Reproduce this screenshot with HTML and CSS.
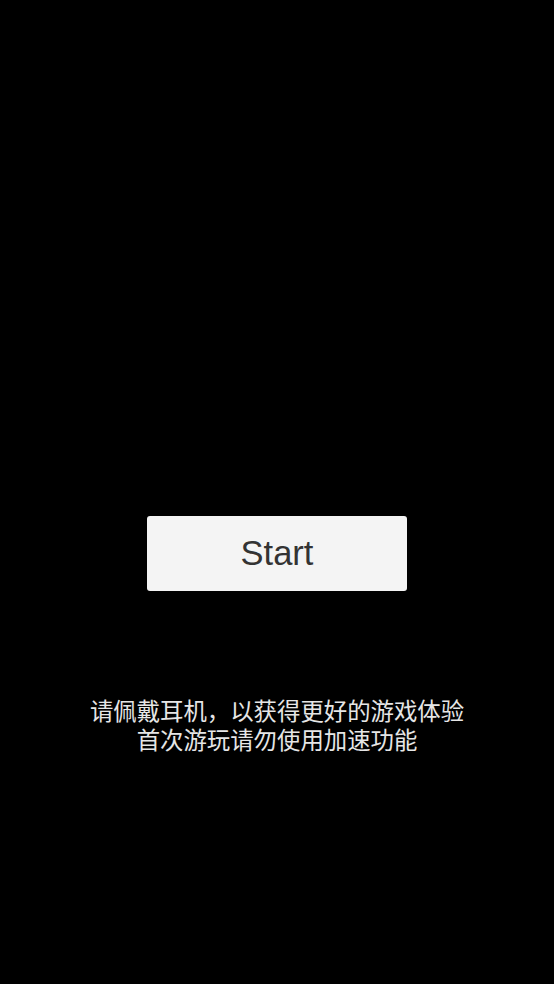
FILE: index.html
```html
<!DOCTYPE html>
<html lang="zh">
<head>
<meta charset="utf-8">
<title>Start</title>
<link rel="stylesheet" href="styles.css">
</head>
<body>
<main class="screen">
  <button class="start-btn" type="button">Start</button>
  <p class="notice"><span class="line">请佩戴耳机，以获得更好的游戏体验</span><span class="line">首次游玩请勿使用加速功能</span></p>
</main>
</body>
</html>
```
FILE: styles.css
```css
html, body {
  margin: 0;
  padding: 0;
  background: #000;
  height: 100%;
}

.screen {
  height: 984px;
  display: flex;
  flex-direction: column;
  align-items: center;
  padding-top: 516px;
  box-sizing: border-box;
}

.start-btn {
  width: 260px;
  height: 75px;
  border: none;
  border-radius: 3px;
  background: #f4f4f4;
  color: #333;
  font-family: "Liberation Sans", Arial, sans-serif;
  font-size: 34.5px;
  padding: 0;
  cursor: pointer;
}

.notice {
  margin: 105px 0 0;
  color: #e6e6e6;
  font-family: "Noto Sans CJK SC", "Noto Sans", sans-serif;
  font-size: 23.4px;
  text-align: center;
  display: flex;
  flex-direction: column;
  align-items: center;
}

.line {
  display: block;
  line-height: 29px;
  height: 29px;
}
```
